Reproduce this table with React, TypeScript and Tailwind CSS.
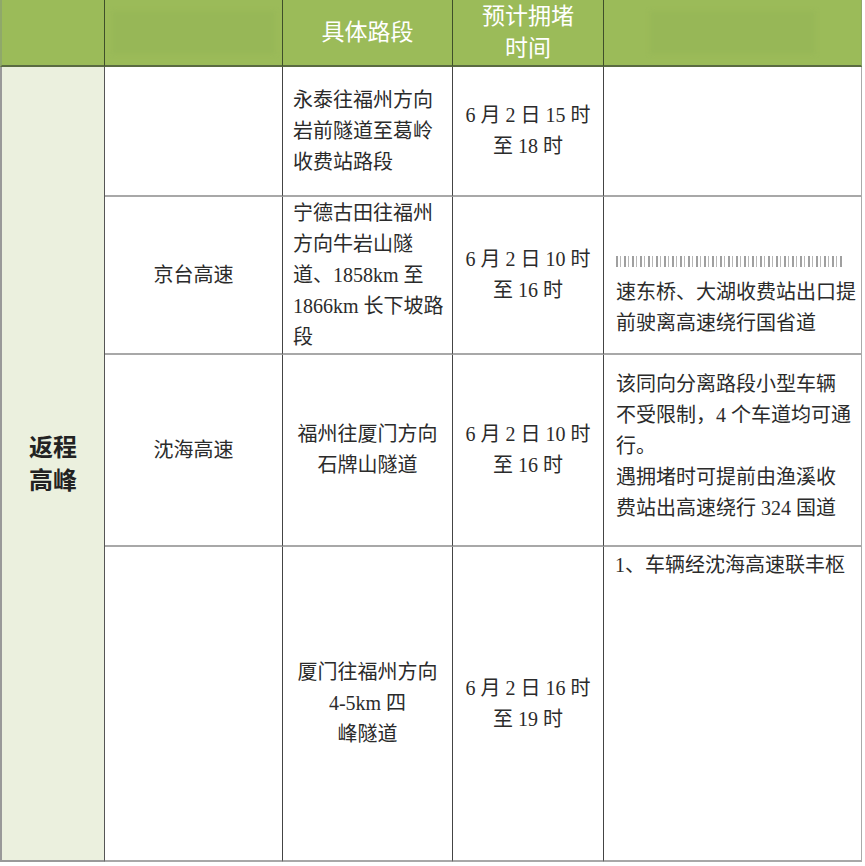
const serif = "font-['Liberation_Serif','Noto_Sans_CJK_SC',serif]"

function Lines({ lines, align = 'left' }: { lines: string[]; align?: 'left' | 'center' }) {
  return (
    <div className={align === 'center' ? 'text-center' : 'text-left'}>
      {lines.map((l, i) => (
        <div key={i} className="whitespace-nowrap">
          {l}
        </div>
      ))}
    </div>
  )
}

const head = 'border-r border-r-[#3f4f2a] border-b-2 border-b-[#5a6b42] bg-[#9bbb59] text-white text-[23px] leading-[32px] flex items-center justify-center'
const cell = 'border-r border-r-[#444] border-b-2 border-b-[#a8a8a8] bg-white flex items-center'

export default function App() {
  return (
    <div className={`w-[865px] h-[866px] bg-white text-[#2b2b2b] ${serif}`}>
      <div className="grid grid-cols-[105px_178px_170px_151px_258px] grid-rows-[67px_130px_158px_192px_315px] text-[20px] leading-[31px]">
        {/* header */}
        <div className={`${head} border-l-2 border-l-[#8fa86a]`} />
        <div className={head}>
          <div className="w-[163px] h-[43px] bg-[#97b757] blur-[2px]" />
        </div>
        <div className={head}>具体路段</div>
        <div className={`${head} flex-col`}>
          <div>预计拥堵</div>
          <div>时间</div>
        </div>
        <div className={`${head} border-r-[#8fa86a]`}>
          <div className="w-[165px] h-[43px] bg-[#97b757] blur-[2px]" />
        </div>

        {/* first column */}
        <div className="row-span-4 border-l-2 border-l-[#999] border-r border-r-[#555] border-b-2 border-b-[#999] bg-[#ebf0de] flex items-center justify-center pt-[2px]">
          <div className="text-[24px] leading-[33px] font-bold text-[#222] text-center">
            <div>返程</div>
            <div>高峰</div>
          </div>
        </div>

        {/* row 1 */}
        <div className={cell} />
        <div className={`${cell} pl-[10px]`}>
          <Lines lines={['永泰往福州方向', '岩前隧道至葛岭', '收费站路段']} />
        </div>
        <div className={`${cell} justify-center`}>
          <Lines align="center" lines={['6 月 2 日 15 时', '至 18 时']} />
        </div>
        <div className={`${cell} border-r-[#aaa]`} />

        {/* row 2 */}
        <div className={`${cell} justify-center`}>京台高速</div>
        <div className={`${cell} pl-[10px]`}>
          <Lines lines={['宁德古田往福州', '方向牛岩山隧', '道、1858km 至', '1866km 长下坡路', '段']} />
        </div>
        <div className={`${cell} justify-center`}>
          <Lines align="center" lines={['6 月 2 日 10 时', '至 16 时']} />
        </div>
        <div className={`${cell} border-r-[#aaa] items-start pl-[12px] pt-[49px]`}>
          <div>
            {/* smeared, unreadable scan line */}
            <div className="h-[31px] flex items-center">
              <div className="w-[226px] h-[11px] opacity-70 bg-[repeating-linear-gradient(90deg,#777_0_2px,transparent_2px_4px,#999_4px_5px,transparent_5px_8px)]" />
            </div>
            <Lines lines={['速东桥、大湖收费站出口提', '前驶离高速绕行国省道']} />
          </div>
        </div>

        {/* row 3 */}
        <div className={`${cell} justify-center`}>沈海高速</div>
        <div className={`${cell} justify-center`}>
          <Lines align="center" lines={['福州往厦门方向', '石牌山隧道']} />
        </div>
        <div className={`${cell} justify-center`}>
          <Lines align="center" lines={['6 月 2 日 10 时', '至 16 时']} />
        </div>
        <div className={`${cell} border-r-[#aaa] pl-[12px] pb-[8px]`}>
          <Lines
            lines={[
              '该同向分离路段小型车辆',
              '不受限制，4 个车道均可通',
              '行。',
              '遇拥堵时可提前由渔溪收',
              '费站出高速绕行 324 国道',
            ]}
          />
        </div>

        {/* row 4 */}
        <div className={`${cell} border-b-[#999]`} />
        <div className={`${cell} border-b-[#999] justify-center`}>
          <Lines align="center" lines={['厦门往福州方向', '4-5km 四', '峰隧道']} />
        </div>
        <div className={`${cell} border-b-[#999] justify-center`}>
          <Lines align="center" lines={['6 月 2 日 16 时', '至 19 时']} />
        </div>
        <div className={`${cell} border-b-[#999] border-r-[#aaa] items-start pl-[11px] pt-[3px]`}>
          <Lines lines={['1、车辆经沈海高速联丰枢']} />
        </div>
      </div>
    </div>
  )
}
